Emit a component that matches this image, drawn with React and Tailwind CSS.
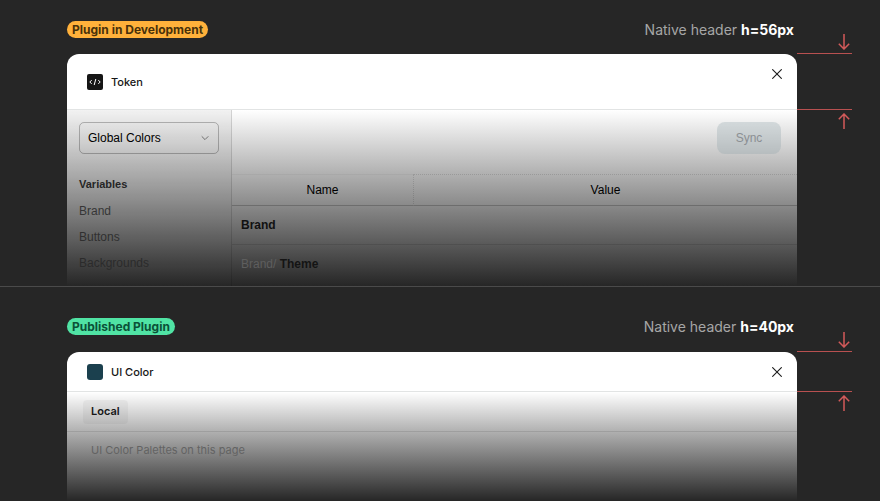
import React from "react";

const INTER = "font-['Inter','Liberation_Sans',sans-serif]";
const ARIAL = "font-['Liberation_Sans',Arial,sans-serif]";

function Arrow({ up = false }) {
  return (
    <svg
      className={up ? "mr-[2px] h-4 w-3 rotate-180" : "mr-[2px] h-4 w-3"}
      viewBox="0 0 12 16"
      fill="none"
      stroke="#d35a5a"
      strokeWidth="1.5"
      aria-hidden="true"
    >
      <path d="M6 0V15M0.8 9.8L6 15L11.2 9.8" />
    </svg>
  );
}

function Measure({ className, gap }) {
  return (
    <div className={`flex w-[55px] shrink-0 flex-col items-end ${className}`}>
      <Arrow />
      <div className={`mt-[3px] w-full border-y border-[#b85050] ${gap}`} />
      <div className="mt-[3px]">
        <Arrow up />
      </div>
    </div>
  );
}

function Caption({ tag, tagClass, size }) {
  return (
    <div className="flex h-[19px] items-center justify-between pr-[3px]">
      <span className={`flex h-[17px] items-center rounded-full px-[5px] text-xs font-bold ${tagClass}`}>
        {tag}
      </span>
      <p className="text-sm text-[#a6a6a6]">
        Native header <strong className="font-bold text-white">{size}</strong>
      </p>
    </div>
  );
}

function CloseButton() {
  return (
    <button type="button" aria-label="Close" className="mt-3 ml-auto flex size-4 items-center justify-center self-start">
      <svg className="size-[10px]" viewBox="0 0 10 10" stroke="#1c1c1c" strokeWidth="1.1" aria-hidden="true">
        <path d="M0.3 0.3L9.7 9.7M9.7 0.3L0.3 9.7" />
      </svg>
    </button>
  );
}

function PluginHeader({ className, icon, title }) {
  return (
    <header className={`flex items-center border-b border-[#e2e4e4] bg-white pr-3 pl-5 ${className}`}>
      {icon}
      <h2 className="ml-2 text-[11px] leading-4 font-medium text-[#161616]">{title}</h2>
      <CloseButton />
    </header>
  );
}

const TokenIcon = (
  <svg className="size-4" viewBox="0 0 16 16" fill="none" aria-hidden="true">
    <rect width="16" height="16" rx="2" fill="#161616" />
    <path d="M4.7 6.1L2.8 8L4.7 9.9M11.3 6.1L13.2 8L11.3 9.9M8.8 5L7.2 11" stroke="#fff" strokeWidth="1" />
  </svg>
);

const links = [
  { label: "Brand", tone: "text-[#363636]" },
  { label: "Buttons", tone: "text-[#303030]" },
  { label: "Backgrounds", tone: "text-[#2b2b2b]" },
];

function TokenBody() {
  return (
    <div className={`flex h-44 bg-linear-to-b/srgb from-white to-[#262626] text-xs ${ARIAL}`}>
      <aside className="w-[165px] shrink-0 border-r border-black/12 bg-linear-to-b/srgb from-black/5 to-transparent px-3 pt-3">
        <div className="relative">
          <select
            aria-label="Collection"
            className="h-8 w-full appearance-none rounded-[5px] border border-black/25 bg-transparent px-2 text-xs text-black"
          >
            <option>Global Colors</option>
          </select>
          <svg
            className="pointer-events-none absolute top-3 right-[10px] size-2"
            viewBox="0 0 8 8"
            fill="none"
            stroke="#6f6f6f"
            aria-hidden="true"
          >
            <path d="M0.7 2.3L4 5.6L7.3 2.3" />
          </svg>
        </div>
        <h3 className="mt-[22px] text-[11px] leading-4 font-bold text-[#262626]">Variables</h3>
        <nav className="mt-[6px]">
          {links.map((l) => (
            <a key={l.label} href="#" className={`block leading-[26px] ${l.tone}`}>
              {l.label}
            </a>
          ))}
        </nav>
      </aside>
      <div className="min-w-0 flex-1">
        <div className="flex h-16 items-start justify-end px-4 pt-3">
          <button type="button" disabled className="h-8 w-16 rounded-lg bg-[#8fa2aa]/30 text-[#8b8f93]">
            Sync
          </button>
        </div>
        <table className="w-full table-fixed border-separate border-spacing-0">
          <thead>
            <tr className="h-8">
              <th className="w-[181px] border-t border-b border-t-black/4 border-b-black/20 p-0 font-normal text-black">
                Name
              </th>
              <th className="border-t border-b border-l border-dotted border-t-black/12 border-b-black/20 border-l-black/12 p-0 font-normal text-black [border-bottom-style:solid]">
                Value
              </th>
            </tr>
          </thead>
          <tbody>
            <tr className="h-[39px]">
              <td colSpan={2} className="border-b border-black/10 p-0 pl-[9px] font-bold text-[#111]">
                Brand
              </td>
            </tr>
            <tr className="h-[37px]">
              <td colSpan={2} className="p-0 pl-[9px] font-bold text-[#141414]">
                <span className="font-normal text-[#5e5e5e]">Brand/</span> Theme
              </td>
            </tr>
          </tbody>
        </table>
      </div>
    </div>
  );
}

export default function App() {
  return (
    <main className={`min-h-screen bg-[#262626] ${INTER}`}>
      <section className="flex border-b border-[#4a4a4a] pr-7 pl-[67px]">
        <div className="min-w-0 flex-1 pt-5">
          <Caption tag="Plugin in Development" tagClass="bg-[#ffb13b] text-[#49310a]" size="h=56px" />
          <div className="mt-[15px] overflow-hidden rounded-t-xl">
            <PluginHeader className="h-14" icon={TokenIcon} title="Token" />
            <TokenBody />
          </div>
        </div>
        <Measure className="pt-[34px]" gap="h-[57px]" />
      </section>

      <section className="flex pr-7 pl-[67px]">
        <div className="min-w-0 flex-1 pt-[30px]">
          <Caption tag="Published Plugin" tagClass="bg-[#50e3a4] text-[#0b5137]" size="h=40px" />
          <div className="mt-4 overflow-hidden rounded-t-xl">
            <PluginHeader
              className="h-10"
              icon={<span className="size-4 rounded-[3px] bg-[#1b404e]" />}
              title="UI Color"
            />
            <div className="h-[109px] bg-linear-to-b/srgb from-white to-[#262626] text-[11px]">
              <div className="flex h-10 items-center border-b border-black/10 px-4">
                <button type="button" className="h-6 rounded-sm bg-black/4 px-2 font-semibold text-[#161616]">
                  Local
                </button>
              </div>
              <p className="px-6 pt-[10px] leading-4 text-[#636363]">UI Color Palettes on this page</p>
            </div>
          </div>
        </div>
        <Measure className="pt-[45px]" gap="h-[41px]" />
      </section>
    </main>
  );
}
